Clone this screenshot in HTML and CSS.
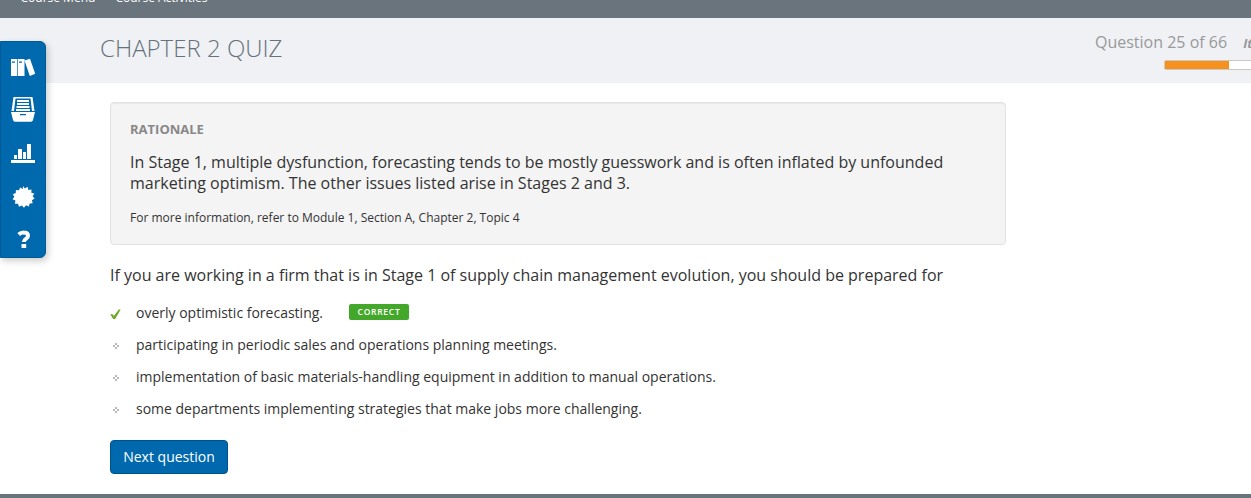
FILE: index.html
```html
<!DOCTYPE html>
<html lang="en">
<head>
<meta charset="utf-8">
<title>Chapter 2 Quiz</title>
<link rel="stylesheet" href="styles.css">
</head>
<body>
<nav class="topbar"><span class="menu">Course Menu</span><span class="activities">Course Activities</span></nav>
<header class="header">
  <h1 class="title">CHAPTER 2 QUIZ</h1>
  <div class="status">
    <div class="count"><span class="count-text">Question 25 of 66</span><em class="items">Items</em></div>
    <div class="progress"><div class="progress-fill"></div></div>
  </div>
</header>
<aside class="sidebar">
  <svg class="icon" viewBox="0 0 26 28"><path fill="#fff" fill-rule="evenodd" d="M1 6h6v17H1zM2 8.500v1.300h3V8.500zM7.700 6h6.800v17H7.700zM9 8.500v1.300h3V8.500zM14.500 7.500l5.500-1.700 5.200 15-5.400 2.100z"/></svg>
  <svg class="icon" viewBox="0 0 26 28"><path fill="#fff" d="M3.500 2h19l2 14h-2.500L20.500 3.500h-15L4 16H1.500z"/><path fill="#fff" d="M7 5h12v2H7zM7 8h12v2H7zM6.500 11h13v2h-13zM6 14h14v2H6z"/><path fill="#fff" fill-rule="evenodd" d="M1 17h24l-2 8q-.4 1.800-2 1.800H5q-1.600 0-2-1.800zM10 19v1.300h6V19z"/></svg>
  <svg class="icon" viewBox="0 0 26 28"><path fill="#fff" d="M1 21h24v3H1zM4 16h3v4H4zM8 10h4v10H8zM13 13h3v7h-3zM17 5h4v15h-4z"/></svg>
  <svg class="icon" viewBox="0 0 26 28"><path fill="#fff" d="M13 4l1.900 2.500 2.700-1.700.8 3.100 3.100-.3-.2 3.100 3 .9-1.700 2.700 2 2.300-2.700 1.600.8 3-3.100.3-.7 3-2.900-1.200-2 2.400-2.200-2.300-2.800 1.400-1-3-3.100-.1.500-3.100-2.900-1.300 1.900-2.500-1.600-2.600 3-1.100.1-3.100 3.100.3 1.100-2.900 2.700 1.600z"/></svg>
  <svg class="icon" viewBox="0 0 26 28"><path fill="none" stroke="#fff" stroke-width="4" d="M8.700 9.500Q11 7.400 13.500 7.500c3.100 0 4.500 1.200 4.500 3.200 0 3.500-4.200 2.800-4.200 6.300"/><path fill="#fff" d="M11.500 19h4.700v4h-4.700z"/></svg>
</aside>
<main class="content">
  <section class="rationale">
    <h2 class="label">RATIONALE</h2>
    <p class="explain">In Stage 1, multiple dysfunction, forecasting tends to be mostly guesswork and is often inflated by unfounded<br>marketing optimism. The other issues listed arise in Stages 2 and 3.</p>
    <p class="more">For more information, refer to Module 1, Section A, Chapter 2, Topic 4</p>
  </section>
  <p class="question">If you are working in a firm that is in Stage 1 of supply chain management evolution, you should be prepared for</p>
  <ul class="answers">
    <li class="answer"><svg class="mark" viewBox="0 0 12 12"><path fill="#69a829" d="M.2 6.200h2.400l1.300 1.800L8.800 1.500h1.800L5.200 11H3.200z"/></svg><span>overly optimistic forecasting.</span><span class="badge">CORRECT</span></li>
    <li class="answer"><svg class="mark" viewBox="0 0 12 12"><path class="dots" d="M5 3h2v2H5zM3 5h2v2H3zM7 5h2v2H7zM5 7h2v2H5z"/></svg><span>participating in periodic sales and operations planning meetings.</span></li>
    <li class="answer"><svg class="mark" viewBox="0 0 12 12"><path class="dots" d="M5 3h2v2H5zM3 5h2v2H3zM7 5h2v2H7zM5 7h2v2H5z"/></svg><span>implementation of basic materials-handling equipment in addition to manual operations.</span></li>
    <li class="answer"><svg class="mark" viewBox="0 0 12 12"><path class="dots" d="M5 3h2v2H5zM3 5h2v2H3zM7 5h2v2H7zM5 7h2v2H5z"/></svg><span>some departments implementing strategies that make jobs more challenging.</span></li>
  </ul>
  <button class="next">Next question</button>
</main>
<footer class="footer"></footer>
</body>
</html>
```
FILE: styles.css
```css
* { box-sizing: border-box; margin: 0; }
body {
  height: 498px;
  display: flex;
  flex-direction: column;
  overflow: hidden;
  background: #fff;
  color: #333;
  font-family: "Open Sans", sans-serif;
}
.topbar {
  flex: none;
  height: 18px;
  padding-left: 20.500px;
  display: flex;
  gap: 20px;
  overflow: hidden;
  background: #6a747c;
  color: #fff;
  font-size: 12px;
  line-height: 18px;
}
.topbar span { margin-top: -11px; white-space: nowrap; }
.header {
  flex: none;
  height: 65px;
  padding-left: 100px;
  display: flex;
  justify-content: space-between;
  overflow: hidden;
  background: #eff1f5;
}
.title {
  padding-top: 13px;
  font-size: 24px;
  line-height: 33px;
  font-weight: 300;
  color: #66717a;
  white-space: nowrap;
}
.status { width: 156px; color: #999; }
.count { display: flex; gap: 16px; padding-top: 13px; white-space: nowrap; line-height: 22px; }
.count-text, .items { height: 25px; }
.count-text { font-size: 16px; }
.items { font-size: 13px; font-weight: 700; line-height: 25px; }
.progress {
  width: 220px;
  height: 10px;
  margin: 4px 0 0 69px;
  border: 1px solid #c9c9c4;
  border-radius: 2px;
  background: #fff;
}
.progress-fill { width: 64px; height: 8px; background: #f6901e; }
.sidebar {
  position: absolute;
  left: 0;
  top: 41px;
  width: 46px;
  height: 217px;
  padding: 11px 0 0 10px;
  display: flex;
  flex-direction: column;
  gap: 15px;
  border: 1px solid #005a94;
  border-radius: 0 6px 6px 0;
  background: #0069ae;
  box-shadow: 2px 3px 7px rgba(0, 0, 0, .2);
}
.icon { width: 26px; height: 28px; flex: none; margin-left: -1px; }
.icon:nth-child(2) { margin-top: -1px; margin-bottom: 1px; }
.content { flex: 1; padding: 19px 0 0 110px; }
.rationale {
  width: 896px;
  height: 143px;
  padding: 16px 19px;
  border: 1px solid #e2e2e2;
  border-radius: 4px;
  background: #f4f4f4;
  box-shadow: inset 0 1px 1px rgba(0, 0, 0, .05);
}
.label { font-size: 13px; line-height: 20px; font-weight: 700; color: #888; }
.explain { margin-top: 13px; font-size: 16px; line-height: 21px; white-space: nowrap; }
.more { margin-top: 14px; font-size: 12px; line-height: 20px; }
.question { margin-top: 18px; font-size: 16px; line-height: 24px; white-space: nowrap; }
.answers { list-style: none; padding: 0; margin-top: 9px; }
.answer { height: 32px; display: flex; align-items: center; font-size: 14px; white-space: nowrap; }
.mark { width: 12px; height: 12px; margin: 3px 14px 0 0; flex: none; }
.dots { fill: #bbb; }
.badge {
  width: 60px;
  height: 16px;
  margin: 0 0 0 26px;
  border-radius: 2px;
  background: #43a82a;
  color: #fff;
  font-size: 8.500px;
  line-height: 16px;
  letter-spacing: .7px;
  font-weight: 600;
  text-align: center;
}
.next {
  width: 118px;
  height: 34px;
  margin-top: 16px;
  padding: 0 0 2px;
  border: 1px solid #005288;
  border-radius: 4px;
  background: #0069ae;
  color: #fff;
  font: 14px "Open Sans", sans-serif;
}
.footer { flex: none; height: 4px; background: #6a747c; }
```
